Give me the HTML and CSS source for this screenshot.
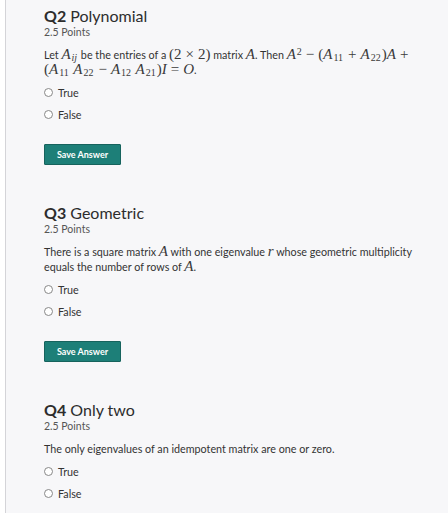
FILE: index.html
```html
<!DOCTYPE html>
<html>
<head>
<meta charset="utf-8">
<link rel="stylesheet" href="styles.css">
</head>
<body>
<div class="page">
  <div class="rail"></div>
  <main class="content">
    <section class="question">
      <h2 class="q-title"><b>Q2</b> Polynomial</h2>
      <div class="points">2.5 Points</div>
      <p class="prompt">Let <span class="m">A<sub>ij</sub></span> be the entries of a <span class="m"><span class="up">(2<span class="op">×</span>2)</span></span> matrix <span class="m">A</span>. Then <span class="m">A<sup class="up">2</sup><span class="op">−</span><span class="up">(</span>A<sub class="up">11</sub><span class="op">+</span>A<sub class="up">22</sub><span class="up">)</span>A<span class="op">+</span></span><br><span class="m"><span class="up">(</span>A<sub class="up">11</sub> A<sub class="up">22</sub><span class="op">−</span>A<sub class="up">12</sub> A<sub class="up">21</sub><span class="up">)</span>I<span class="op">=</span>O</span>.</p>
      <div class="options">
        <label class="opt"><span class="radio"></span>True</label>
        <label class="opt"><span class="radio"></span>False</label>
      </div>
      <button class="save">Save Answer</button>
    </section>

    <section class="question">
      <h2 class="q-title"><b>Q3</b> Geometric</h2>
      <div class="points">2.5 Points</div>
      <p class="prompt">There is a square matrix <span class="m">A</span> with one eigenvalue <span class="m">r</span> whose geometric multiplicity equals the number of rows of <span class="m">A</span>.</p>
      <div class="options">
        <label class="opt"><span class="radio"></span>True</label>
        <label class="opt"><span class="radio"></span>False</label>
      </div>
      <button class="save">Save Answer</button>
    </section>

    <section class="question">
      <h2 class="q-title"><b>Q4</b> Only two</h2>
      <div class="points">2.5 Points</div>
      <p class="prompt">The only eigenvalues of an idempotent matrix are one or zero.</p>
      <div class="options">
        <label class="opt"><span class="radio"></span>True</label>
        <label class="opt"><span class="radio"></span>False</label>
      </div>
    </section>
  </main>
</div>
</body>
</html>
```

FILE: styles.css
```css
html, body {
  margin: 0;
  padding: 0;
  background: #f7f7f9;
}
body {
  font-family: Lato, "Open Sans", Arial, sans-serif;
  color: #333;
}
.page {
  display: flex;
  min-height: 513px;
}
.rail {
  width: 5px;
  background: #ffffff;
  border-right: 1px solid #d4d4d8;
  flex: none;
}
.content {
  flex: 1;
  padding: 6px 20px 0 38px;
}
.question {
  padding-bottom: 38px;
}
.q-title {
  margin: 0;
  font-size: 16px;
  line-height: 20px;
  font-weight: 400;
  color: #2d2d2d;
}
.q-title b {
  font-weight: 700;
}
.points {
  font-size: 10.5px;
  line-height: 12px;
  color: #555;
}
.prompt {
  margin: 9px 0 0;
  font-size: 10.75px;
  line-height: 15px;
  color: #333;
}
.m {
  font-family: "Liberation Serif", "DejaVu Serif", serif;
  font-style: italic;
  font-size: 15px;
  line-height: 0;
  color: #3a3a3a;
}
.m .up, .up {
  font-style: normal;
}
.m sub, .m sup {
  font-size: 10px;
  line-height: 0;
}
.m sub {
  vertical-align: -0.2em;
  margin-left: 1px;
  margin-right: 1px;
}
.m sup {
  vertical-align: 0.45em;
  margin-left: 1px;
}
.op {
  font-style: normal;
  margin: 0 4px;
}
.options {
  margin-top: 4px;
  display: flex;
  flex-direction: column;
}
.opt {
  display: flex;
  align-items: center;
  height: 22px;
  font-size: 10.75px;
  color: #333;
}
.radio {
  width: 7px;
  height: 7px;
  border: 1.5px solid #888;
  border-radius: 50%;
  background: #fff;
  margin-right: 5px;
  flex: none;
}
.save {
  display: block;
  margin-top: 19px;
  width: 77px;
  height: 21px;
  padding: 0;
  background: #1d7f78;
  border: 1px solid #16635d;
  border-radius: 1px;
  color: #fff;
  font-family: Lato, Arial, sans-serif;
  font-size: 9px;
  font-weight: 700;
}
```
